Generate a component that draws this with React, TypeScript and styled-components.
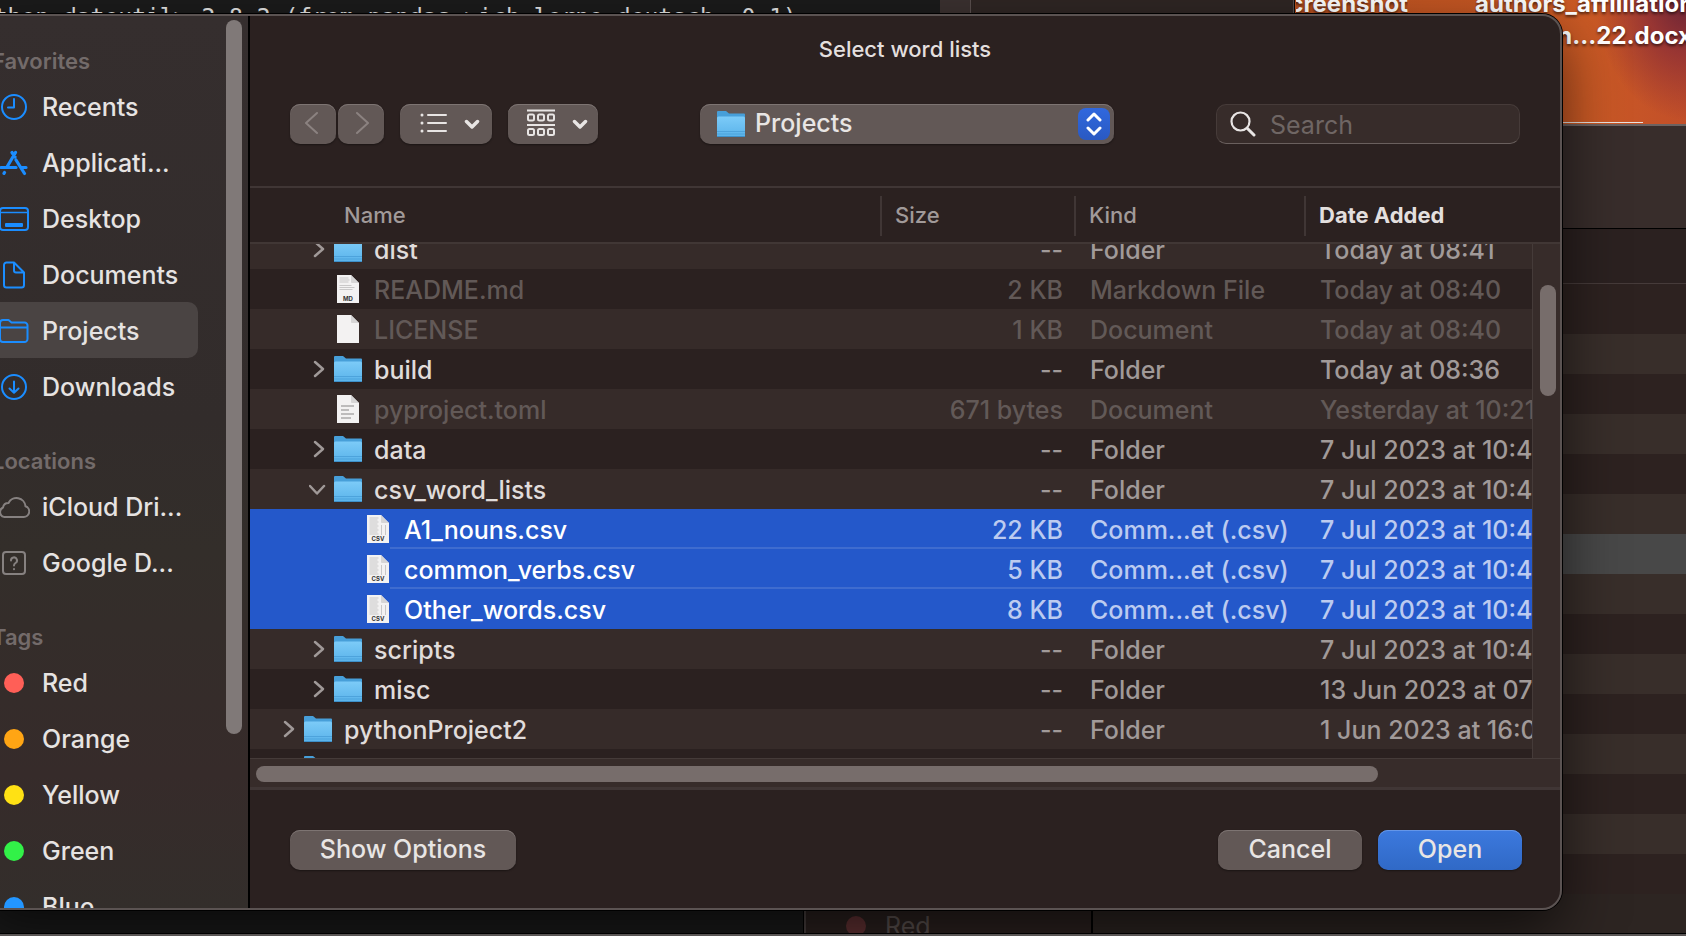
import React, { useLayoutEffect, useRef } from "react";
import styled, { createGlobalStyle, css } from "styled-components";

const Global = createGlobalStyle`
  * { box-sizing: border-box; }
  html, body { margin: 0; height: 100%; }
  #root { height: 100%; }
  body { background: #1b1b1b; overflow: hidden; }
  body, button, input, select { font-family: Inter, "Liberation Sans", sans-serif; }
`;

/* ---------- windows behind the dialog ---------- */

const Desktop = styled.div`
  position: relative;
  height: 100%;
  overflow: hidden;
  background:
    radial-gradient(ellipse 90px 120px at 100% 0, #6a2436 0%, rgba(142, 47, 53, 0.8) 45%, transparent 100%),
    linear-gradient(90deg, #b9501f 75%, #cb5a25 94%, #c24f29 100%);
`;

const Terminal = styled.div`
  position: absolute;
  left: 0;
  top: 0;
  right: 746px;
  bottom: 0;
  background: #1b1b1b;
  color: #e4e4e4;
`;

const TerminalLine = styled.p`
  margin: 0 0 0 -34px;
  white-space: pre;
  font: 23px/34px "DejaVu Sans Mono", monospace;
`;

const MiddleWindow = styled.div`
  position: absolute;
  top: 0;
  right: 391px;
  bottom: 0;
  width: 355px;
  border-right: 1px solid #0c0808;
  display: flex;
  background: #2f2624;
  box-shadow: inset -1px 0 #574c4a;
`;

const MiddleStrip = styled.div`
  width: 31px;
  background: #3b3130;
  border-right: 1px solid #5a4f4e;
`;

const DesktopLabel = styled.span<{ $right: number; $top: number; $width: number }>`
  position: absolute;
  right: ${(p) => p.$right}px;
  top: ${(p) => p.$top}px;
  width: ${(p) => p.$width}px;
  overflow: hidden;
  white-space: nowrap;
  direction: ${(p) => (p.$width < 200 ? "rtl" : "ltr")};
  color: #fff;
  font-size: 24px;
  line-height: 32px;
  font-weight: 700;
  text-shadow: 0 2px 3px rgba(0, 0, 0, 0.6);
`;

const RightWindow = styled.div`
  position: absolute;
  top: 124px;
  right: 0;
  bottom: 2px;
  width: 595px;
  border-top: 2px solid #6d6260;
  background: #2b2120;
`;

const RightToolbar = styled.div`
  height: 103px;
  background: #382d2b;
  border-bottom: 1px solid #000;
`;

const RightHeader = styled.div`
  height: 55px;
  border-bottom: 1px solid #463b3a;
`;

const RightRow = styled.div<{ $tone: "dark" | "light" | "selected"; $short?: boolean }>`
  height: ${(p) => (p.$short ? 10 : 40)}px;
  background: ${(p) => ({ dark: "#2d2220", light: "#382e2a", selected: "#484848" })[p.$tone]};
`;

const WhiteEdge = styled.div`
  position: absolute;
  top: 122px;
  right: 43px;
  width: 90px;
  height: 1px;
  background: #e8e4e2;
`;

const LowerWindow = styled.div`
  position: absolute;
  left: 803px;
  right: 0;
  bottom: 2px;
  height: 40px;
  display: flex;
  overflow: hidden;
  background: #2d2522;
  border-left: 1px solid #000;
`;

const LowerSidebar = styled.div`
  width: 289px;
  padding: 24px 0 0 40px;
  display: flex;
  align-items: center;
  gap: 19px;
  color: #5e5452;
  background: #2c2220;
  border-left: 2px solid #4a4140;
  border-right: 2px solid #000;
  font-size: 25px;
  line-height: 32px;
`;

const BottomEdge = styled.div`
  position: absolute;
  left: 0;
  right: 0;
  bottom: 0;
  height: 3px;
  background: #5a5655;
  border-top: 1px solid #000;
`;

/* ---------- dialog ---------- */

const Dialog = styled.div`
  position: absolute;
  left: -24px;
  top: 14px;
  right: 124px;
  bottom: 26px;
  display: flex;
  overflow: hidden;
  border-radius: 20px;
  border: 2px solid #5b5352;
  background: #2b2120;
  color: #e3dfde;
`;

const DialogShadow = styled(Dialog)`
  border: 0;
  overflow: visible;
  box-shadow: 0 0 0 1px #000, 0 24px 60px rgba(0, 0, 0, 0.6);
`;

const Sidebar = styled.nav`
  flex: 0 0 272px;
  display: flex;
  overflow: hidden;
  padding-left: 22px;
  border-right: 2px solid #000;
  background: linear-gradient(#352e2e, #322c2b 45%, #332e2a 60%, #362b2a 85%, #332e2b);
`;

const SidebarList = styled.div`
  flex: 0 0 198px;
  padding-top: 28px;
`;

const SidebarSection = styled.section`
  margin-bottom: 30px;
`;

const SidebarHeading = styled.h2`
  margin: 0 0 0 -8px;
  font-size: 22px;
  line-height: 34px;
  font-weight: 600;
  color: #736b6a;
`;

const SidebarItem = styled.a<{ $active?: boolean }>`
  display: flex;
  align-items: center;
  height: 56px;
  gap: 12px;
  padding-top: 1px;
  border-radius: 0 10px 10px 0;
  font-size: 25px;
  line-height: 32px;
  font-weight: 500;
  color: #e6e3e2;
  text-decoration: none;
  white-space: nowrap;
  background: ${(p) => (p.$active ? "#4a4443" : "transparent")};
  svg { flex: none; }
`;

const Dot = styled.span<{ $color: string; $flush?: boolean }>`
  flex: none;
  width: 20px;
  height: 20px;
  margin: ${(p) => (p.$flush ? "0" : "0 6px 0 4px")};
  border-radius: 50%;
  background: ${(p) => p.$color};
`;

const Thumb = styled.div`
  border-radius: 8px;
  background: #776d6b;
`;

const SidebarThumb = styled(Thumb)`
  width: 16px;
  height: 714px;
  margin: 4px 0 0 28px;
  background: #807978;
`;

const Main = styled.main`
  flex: 1;
  min-width: 0;
  display: flex;
  flex-direction: column;
`;

const Title = styled.h1`
  margin: 0;
  padding: 17px 0 39px;
  text-align: center;
  font-size: 22px;
  line-height: 32px;
  font-weight: 500;
`;

const Toolbar = styled.div`
  display: flex;
  align-items: center;
  padding: 0 40px 42px;
`;

const raised = css`
  height: 40px;
  border: 0;
  border-radius: 10px;
  background: #625856;
  box-shadow: inset 0 1px #7d7472, 0 1px 2px rgba(0, 0, 0, 0.4);
  color: #e8e5e4;
`;

const ToolButton = styled.button<{ $width: number; $gap: number; $menu?: boolean }>`
  ${raised}
  width: ${(p) => p.$width}px;
  margin-right: ${(p) => p.$gap}px;
  padding: 0 0 2px ${(p) => (p.$menu ? 8 : 0)}px;
  display: flex;
  align-items: center;
  justify-content: center;
  gap: 16px;
`;

const Spacer = styled.div`
  flex: 1 1 0;
`;

const LocationBox = styled.label`
  ${raised}
  flex: 0 0 414px;
  display: flex;
  align-items: center;
  gap: 10px;
  padding: 0 4px 0 17px;
`;

const LocationSelect = styled.select`
  flex: 1;
  appearance: none;
  border: 0;
  padding: 0 0 2px;
  background: none;
  color: inherit;
  font-size: 25px;
  line-height: 32px;
  font-weight: 500;
  outline: none;
`;

const Stepper = styled.span`
  display: flex;
  align-items: center;
  justify-content: center;
  width: 32px;
  height: 32px;
  border-radius: 8px;
  background: linear-gradient(#3068de, #2a59c2);
`;

const SearchBox = styled.label`
  flex: 0 0 304px;
  min-width: 0;
  display: flex;
  align-items: center;
  gap: 14px;
  height: 40px;
  padding: 0 13px;
  border: 1px solid #463b39;
  border-bottom-color: #6a605e;
  border-radius: 10px;
  background: #372c2a;
`;

const SearchInput = styled.input`
  flex: 1;
  width: 0;
  min-width: 0;
  border: 0;
  padding: 2px 0 0;
  outline: none;
  background: none;
  color: #e3dfde;
  font-size: 25px;
  &::placeholder { color: #6f6664; opacity: 1; }
`;

const Browser = styled.div`
  flex: 1;
  min-height: 0;
  display: grid;
  grid-template: "head head" 56px "body vertical" 1fr "horizontal horizontal" 32px / 1fr 27px;
  border-top: 2px solid #403635;
`;

const FileTable = styled.table`
  display: contents;
`;

const Head = styled.thead`
  grid-area: head;
  display: block;
  padding: 8px 0 6px;
  border-bottom: 2px solid #413735;
`;

const Body = styled.tbody`
  grid-area: body;
  display: block;
  min-height: 0;
  overflow: hidden;
  border-right: 1px solid #453b39;
`;

const HeadRow = styled.tr`
  display: grid;
  grid-template-columns: 1fr 194px 230px 256px;
  height: 40px;
`;

const HeadCell = styled.th<{ $first?: boolean; $strong?: boolean }>`
  padding: 0 0 0 ${(p) => (p.$first ? 94 : 13)}px;
  border-left: ${(p) => (p.$first ? 0 : 2)}px solid #403635;
  text-align: left;
  font-size: 22px;
  line-height: 38px;
  font-weight: ${(p) => (p.$strong ? 700 : 500)};
  color: ${(p) => (p.$strong ? "#e3dfde" : "#a19a99")};
`;

type Tone = "normal" | "dim" | "selected";

const Row = styled.tr<{ $tone: Tone; $line?: boolean }>`
  display: grid;
  grid-template-columns: 1fr 194px 230px 227px;
  height: 40px;
  font-size: 25px;
  line-height: 40px;
  font-weight: 500;
  white-space: nowrap;
  color: ${(p) => ({ normal: "#a19a99", dim: "#625957", selected: "#bccbf0" })[p.$tone]};
  background: #2b2120;
  &:nth-child(odd) { background: #362b29; }
  ${(p) =>
    p.$tone === "selected" &&
    css`
      &&, &&:nth-child(odd) {
        background: ${p.$line
          ? "linear-gradient(#3f6ccf, #3f6ccf) 140px 38px / 100% 2px no-repeat #2458ca"
          : "#2458ca"};
      }
    `}
`;

const NameCell = styled.td<{ $level: number; $tone: Tone }>`
  display: flex;
  align-items: center;
  height: 40px;
  padding: 0 0 0 ${(p) => 28 + p.$level * 30}px;
  color: ${(p) => ({ normal: "#e0dcdb", dim: "#625957", selected: "#ffffff" })[p.$tone]};
`;

const NameText = styled.span`
  padding-top: 2px;
`;

const Disclosure = styled.span`
  display: flex;
  justify-content: center;
  width: 20px;
  margin-right: 6px;
`;

const IconSlot = styled.span`
  display: flex;
  justify-content: center;
  width: 28px;
  margin-right: 12px;
`;

const Cell = styled.td<{ $right?: boolean }>`
  height: 40px;
  padding: 1px 12px 0 15px;
  overflow: hidden;
  text-align: ${(p) => (p.$right ? "right" : "left")};
`;

const DateCell = styled(Cell)`
  padding-right: 0;
`;

const VerticalTrack = styled.div`
  grid-area: vertical;
  padding: 41px 4px 0 7px;
  background: #372c2a;
`;

const VerticalThumb = styled(Thumb)`
  height: 111px;
`;

const HorizontalTrack = styled.div`
  grid-area: horizontal;
  padding: 7px 182px 0 6px;
  border-top: 1px solid #453b39;
  border-bottom: 3px solid #403635;
  background: #372c2a;
`;

const HorizontalThumb = styled(Thumb)`
  height: 16px;
`;

const Footer = styled.footer`
  display: flex;
  gap: 16px;
  padding: 40px 38px 38px 40px;
`;

const PushButton = styled.button<{ $primary?: boolean; $width: number }>`
  ${raised}
  width: ${(p) => p.$width}px;
  padding: 0 0 2px;
  font-size: 25px;
  line-height: 32px;
  font-weight: 500;
  ${(p) =>
    p.$primary &&
    css`
      background: linear-gradient(#3c79de, #3069c6);
      box-shadow: inset 0 1px #6596e8, 0 1px 2px rgba(0, 0, 0, 0.4);
    `}
`;

/* ---------- icons ---------- */

const SideSvg = ({ children, gray }: { children: React.ReactNode; gray?: boolean }) => (
  <svg width="30" height="30" viewBox="-1 0 30 30" fill="none" stroke={gray ? "#868180" : "#1b8dff"} strokeWidth="2" strokeLinecap="round" strokeLinejoin="round">
    {children}
  </svg>
);

const ClockIcon = () => (
  <SideSvg><circle cx="13" cy="15" r="12" /><path d="M13 7v8.500H7" /></SideSvg>
);
const AppsIcon = () => (
  <SideSvg>
    <g strokeWidth="3.200">
      <path d="M14.500 4.500L6 19M11 4.500l3 4.500M15 12l8.500 13.500M0 19.500h15M20.500 19.500h4.500M3.500 24.500l-.500.800" />
    </g>
  </SideSvg>
);
const DesktopIcon = () => (
  <SideSvg>
    <rect x="-1" y="4" width="28" height="22" rx="3" />
    <path d="M0 8.500h26" strokeWidth="1.500" />
    <rect x="4" y="19" width="18" height="4" rx="1" fill="#1b8dff" stroke="none" />
  </SideSvg>
);
const DocIcon = () => (
  <SideSvg><path d="M5.500 2.500H13l10 10V25a2.500 2.500 0 0 1-2.500 2.500h-15A2.500 2.500 0 0 1 3 25V5a2.500 2.500 0 0 1 2.500-2.500zM13 3v7.500a2 2 0 0 0 2 2h8" /></SideSvg>
);
const FolderOutline = () => (
  <SideSvg><path d="M-1 7a3 3 0 0 1 3-3h5.500l3 2.500H23.500a3 3 0 0 1 3 3V23a3 3 0 0 1-3 3H2a3 3 0 0 1-3-3zM-1 11.500h27.500" /></SideSvg>
);
const DownloadIcon = () => (
  <SideSvg><circle cx="13" cy="15" r="12" /><path d="M13 9.500v11M8.500 16.500l4.500 4.300 4.500-4.300" /></SideSvg>
);
const CloudIcon = () => (
  <SideSvg gray><path d="M3.500 25h19a5.500 5.500 0 0 0 2-10.700A9 9 0 0 0 7.500 11 5.500 5.500 0 0 0 2 15.500 5 5 0 0 0 3.500 25z" /></SideSvg>
);
const QuestionIcon = () => (
  <SideSvg gray><rect x="2" y="4" width="22" height="22" rx="3" /><path d="M10 12.500a3 3 0 1 1 4.500 2.500c-1 .7-1.500 1.200-1.500 2.500M13 21v.2" /></SideSvg>
);

const FolderIcon = () => (
  <svg width="28" height="28" viewBox="0 0 28 28">
    <defs>
      <linearGradient id="folder" x1="0" y1="0" x2="0" y2="1">
        <stop offset="0" stopColor="#7ccbf8" /><stop offset="1" stopColor="#5ab3ea" />
      </linearGradient>
    </defs>
    <path d="M0 2a1 1 0 0 1 1-1h8l3 2.500h15a1 1 0 0 1 1 1V26H0z" fill="#479fd9" />
    <path d="M0 8a1.500 1.500 0 0 1 1.500-1.500h25A1.500 1.500 0 0 1 28 8v18a1 1 0 0 1-1 1H1a1 1 0 0 1-1-1z" fill="url(#folder)" />
    <path d="M0 21.500h28M0 24h28" stroke="#4da3dc" strokeWidth="1" />
    <path d="M0 26.500h28" stroke="#3e90c9" strokeWidth="1" />
  </svg>
);

const FileIcon = ({ label, lines }: { label?: string; lines?: boolean }) => (
  <svg width="24" height="30" viewBox="0 0 24 30">
    <path d="M1 1h14l8 8v20H1z" fill="#f3f2f2" />
    {label && (
      <path
        d={label === "MD"
          ? "M3.500 4h9M3.500 6h10M3.500 8h9M3.500 11.500h12M3.500 13.500h15M3.500 15.500h13"
          : "M3.500 4h9M3.500 6h8M3.500 8h9M3.500 10h8M3.500 12h9M3.500 14h8M3.500 16h9M3.500 18h8M3.500 20h9M15.500 11v10M19.500 11v10"}
        stroke="#c9c8c8"
        strokeWidth="1"
      />
    )}
    {lines && <path d="M5 12h13M5 16h8M5 20h13M5 24h10" stroke="#bdbcbc" strokeWidth="2" />}
    <path d="M15 1v7a1 1 0 0 0 1 1h7z" fill="#d6d5d5" />
    {label && (
      <text x="12" y="27" textAnchor="middle" fontSize="6" fontWeight="700" fontFamily="Inter" fill="#333">{label}</text>
    )}
  </svg>
);

const Chevron = ({ open }: { open?: boolean }) => (
  <svg width="18" height="18" viewBox="0 0 18 18" fill="none" stroke="#a09998" strokeWidth="2.500" strokeLinecap="round" strokeLinejoin="round">
    <path d={open ? "M1 6l7 7.500L15 6" : "M6 2l8 7-8 7"} />
  </svg>
);

const NavArrow = ({ forward }: { forward?: boolean }) => (
  <svg width="16" height="24" viewBox="0 0 16 24" fill="none" stroke="#8b8280" strokeWidth="2" strokeLinecap="round" strokeLinejoin="round">
    <path d={forward ? "M4 2l11 10L4 22" : "M12 2L1 12l11 10"} />
  </svg>
);

const DownCaret = () => (
  <svg width="16" height="12" viewBox="0 0 16 12" fill="none" stroke="currentColor" strokeWidth="3.500" strokeLinecap="round" strokeLinejoin="round">
    <path d="M2.500 4.500L8 10l5.500-5.500" />
  </svg>
);

const ListIcon = () => (
  <svg width="28" height="22" viewBox="0 0 28 22" stroke="currentColor" strokeWidth="2" strokeLinecap="round">
    <path d="M8 3h18M8 11h18M8 19h18" /><path d="M2 3h.01M2 11h.01M2 19h.01" strokeWidth="3" />
  </svg>
);

const GroupIcon = () => (
  <svg width="30" height="28" viewBox="0 0 30 28" fill="none" stroke="currentColor" strokeWidth="2">
    <path d="M1 1.500h28M1 16h28" />
    {[5.5, 20].map((y) => [2, 12, 22].map((x) => <rect key={`${x}-${y}`} x={x} y={y} width="6" height="6" rx="1.500" />))}
  </svg>
);

/* ---------- data ---------- */

const favorites = [
  { icon: <ClockIcon />, name: "Recents" },
  { icon: <AppsIcon />, name: "Applicati..." },
  { icon: <DesktopIcon />, name: "Desktop" },
  { icon: <DocIcon />, name: "Documents" },
  { icon: <FolderOutline />, name: "Projects", active: true },
  { icon: <DownloadIcon />, name: "Downloads" },
];
const locations = [
  { icon: <CloudIcon />, name: "iCloud Dri..." },
  { icon: <QuestionIcon />, name: "Google D..." },
];
const tags = [
  { icon: <Dot $color="#ff5f57" />, name: "Red" },
  { icon: <Dot $color="#ffa514" />, name: "Orange" },
  { icon: <Dot $color="#ffe114" />, name: "Yellow" },
  { icon: <Dot $color="#32f148" />, name: "Green" },
  { icon: <Dot $color="#2396ff" />, name: "Blue" },
];

type Entry = {
  name: string;
  size?: string;
  kind?: string;
  date: string;
  level?: number;
  tone?: Tone;
  icon?: React.ReactNode;
  open?: boolean;
  line?: boolean;
};

const csv = { kind: "Comm...et (.csv)", date: "7 Jul 2023 at 10:42", level: 2, tone: "selected" as Tone, icon: <FileIcon label="CSV" /> };

const entries: Entry[] = [
  { name: "dist", date: "Today at 08:41" },
  { name: "README.md", size: "2 KB", kind: "Markdown File", date: "Today at 08:40", tone: "dim", icon: <FileIcon label="MD" /> },
  { name: "LICENSE", size: "1 KB", kind: "Document", date: "Today at 08:40", tone: "dim", icon: <FileIcon /> },
  { name: "build", date: "Today at 08:36" },
  { name: "pyproject.toml", size: "671 bytes", kind: "Document", date: "Yesterday at 10:21", tone: "dim", icon: <FileIcon lines /> },
  { name: "data", date: "7 Jul 2023 at 10:42" },
  { name: "csv_word_lists", date: "7 Jul 2023 at 10:42", open: true },
  { name: "A1_nouns.csv", size: "22 KB", ...csv, line: true },
  { name: "common_verbs.csv", size: "5 KB", ...csv, line: true },
  { name: "Other_words.csv", size: "8 KB", ...csv },
  { name: "scripts", date: "7 Jul 2023 at 10:42" },
  { name: "misc", date: "13 Jun 2023 at 07:15" },
  { name: "pythonProject2", date: "1 Jun 2023 at 16:05", level: 0 },
  { name: "", size: " ", kind: " ", date: "", level: 0 },
];

const backRows = ["dark", "light", "dark", "light", "dark", "light", "selected", "light", "dark", "light", "dark", "light", "dark", "light", "dark", "light"] as const;

type Place = { icon: React.ReactNode; name: string; active?: boolean };

const Section = ({ title, items }: { title: string; items: Place[] }) => (
  <SidebarSection>
    <SidebarHeading>{title}</SidebarHeading>
    {items.map((item) => (
      <SidebarItem key={item.name} href="#" $active={item.active}>
        {item.icon}
        {item.name}
      </SidebarItem>
    ))}
  </SidebarSection>
);

const FileRow = ({ entry }: { entry: Entry }) => {
  const tone = entry.tone ?? "normal";
  return (
    <Row $tone={tone} $line={entry.line}>
      <NameCell $level={entry.level ?? 1} $tone={tone}>
        <Disclosure>{!entry.icon && entry.name && <Chevron open={entry.open} />}</Disclosure>
        <IconSlot>{entry.icon ?? <FolderIcon />}</IconSlot>
        <NameText>{entry.name}</NameText>
      </NameCell>
      <Cell $right>{entry.size ?? "--"}</Cell>
      <Cell>{entry.kind ?? "Folder"}</Cell>
      <DateCell>{entry.date}</DateCell>
    </Row>
  );
};

export default function App() {
  const body = useRef<HTMLTableSectionElement>(null);
  useLayoutEffect(() => {
    if (body.current) body.current.scrollTop = 15;
  }, []);

  return (
    <>
      <Global />
      <Desktop>
        <Terminal>
          <TerminalLine>python-dateutil&gt;=2.8.2 (from pandas-&gt;ich-lerne-deutsch==0.1)</TerminalLine>
        </Terminal>
        <MiddleWindow><MiddleStrip /></MiddleWindow>
        <DesktopLabel $right={278} $top={-12} $width={112}>Screenshot</DesktopLabel>
        <DesktopLabel $right={-40} $top={-12} $width={251}>authors_affilliations</DesktopLabel>
        <DesktopLabel $right={-6} $top={20} $width={153}>n...22.docx</DesktopLabel>
        <WhiteEdge />
        <RightWindow>
          <RightToolbar />
          <RightHeader />
          <RightRow $tone="dark" $short />
          {backRows.map((tone, i) => <RightRow key={i} $tone={tone} />)}
        </RightWindow>
        <LowerWindow>
          <LowerSidebar><Dot $color="#653335" $flush />Red</LowerSidebar>
        </LowerWindow>
        <DialogShadow />
        <BottomEdge />
        <Dialog role="dialog" aria-label="Select word lists">
          <Sidebar>
            <SidebarList>
              <Section title="Favorites" items={favorites} />
              <Section title="Locations" items={locations} />
              <Section title="Tags" items={tags} />
            </SidebarList>
            <SidebarThumb />
          </Sidebar>
          <Main>
            <Title>Select word lists</Title>
            <Toolbar>
              <ToolButton $width={46} $gap={2} aria-label="Back"><NavArrow /></ToolButton>
              <ToolButton $width={46} $gap={16} aria-label="Forward"><NavArrow forward /></ToolButton>
              <ToolButton $width={92} $gap={16} $menu aria-label="View"><ListIcon /><DownCaret /></ToolButton>
              <ToolButton $width={90} $gap={0} $menu aria-label="Group"><GroupIcon /><DownCaret /></ToolButton>
              <Spacer />
              <LocationBox>
                <FolderIcon />
                <LocationSelect aria-label="Location" defaultValue="Projects">
                  <option>Projects</option>
                </LocationSelect>
                <Stepper>
                  <svg width="18" height="24" viewBox="0 0 18 24" fill="none" stroke="#fff" strokeWidth="3" strokeLinecap="round" strokeLinejoin="round">
                    <path d="M3 8l6-6 6 6M3 16l6 6 6-6" />
                  </svg>
                </Stepper>
              </LocationBox>
              <Spacer />
              <SearchBox>
                <svg width="26" height="26" viewBox="0 0 26 26" fill="none" stroke="#e8e5e4" strokeLinecap="round">
                  <circle cx="10.500" cy="10.500" r="9" strokeWidth="2.200" /><path d="M17.500 17.500L24 24" strokeWidth="3" />
                </svg>
                <SearchInput type="search" placeholder="Search" aria-label="Search" />
              </SearchBox>
            </Toolbar>
            <Browser>
              <FileTable>
                <Head>
                  <HeadRow>
                    <HeadCell $first>Name</HeadCell>
                    <HeadCell>Size</HeadCell>
                    <HeadCell>Kind</HeadCell>
                    <HeadCell $strong>Date Added</HeadCell>
                  </HeadRow>
                </Head>
                <Body ref={body}>
                  {entries.map((entry, i) => <FileRow key={i} entry={entry} />)}
                </Body>
              </FileTable>
              <VerticalTrack><VerticalThumb /></VerticalTrack>
              <HorizontalTrack><HorizontalThumb /></HorizontalTrack>
            </Browser>
            <Footer>
              <PushButton $width={226}>Show Options</PushButton>
              <Spacer />
              <PushButton $width={144}>Cancel</PushButton>
              <PushButton $width={144} $primary>Open</PushButton>
            </Footer>
          </Main>
        </Dialog>
      </Desktop>
    </>
  );
}
